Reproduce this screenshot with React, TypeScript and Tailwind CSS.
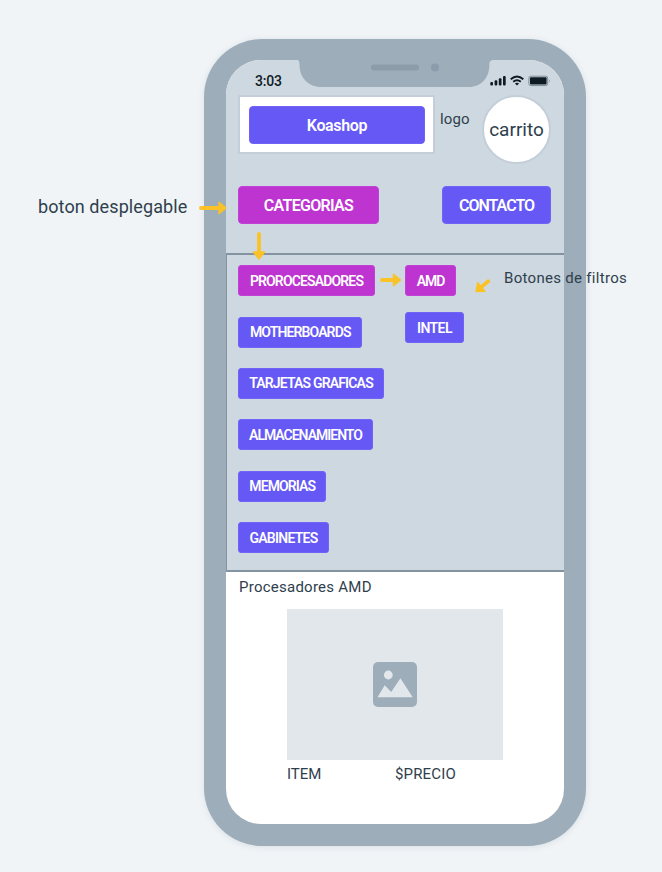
import React from "react";

type ChipProps = { label: string; size: string; active?: boolean };

function Chip({ label, size, active }: ChipProps) {
  return (
    <button
      className={`flex h-[31px] shrink-0 items-center justify-center whitespace-nowrap rounded-[3px] border text-[14px] font-semibold leading-none text-white ${size} ${
        active ? "border-[#c141d5] bg-[#bd34d1]" : "border-[#7063f5] bg-[#6558f5]"
      }`}
    >
      {label}
    </button>
  );
}

const categories: ChipProps[] = [
  { label: "PROROCESADORES", size: "w-[137px] tracking-[-0.85px]", active: true },
  { label: "MOTHERBOARDS", size: "w-[124.5px] tracking-[-0.87px]" },
  { label: "TARJETAS GRAFICAS", size: "w-[146px] tracking-[-0.83px]" },
  { label: "ALMACENAMIENTO", size: "w-[135px] tracking-[-1px]" },
  { label: "MEMORIAS", size: "w-[88.5px] tracking-[-0.9px]" },
  { label: "GABINETES", size: "w-[91px] tracking-[-0.75px]" },
];

function Arrow({ className, length }: { className: string; length: number }) {
  return (
    <svg className={`absolute overflow-visible ${className}`} width={length} height="12" viewBox={`0 0 ${length} 12`}>
      <path d={`M2 6H${length - 7}`} stroke="#fac226" strokeWidth="3.8" strokeLinecap="round" />
      <path
        d={`M${length - 8} .4L${length - 1} 6L${length - 8} 11.6Z`}
        fill="#fac226"
        stroke="#fac226"
        strokeWidth="1.4"
        strokeLinejoin="round"
      />
    </svg>
  );
}

function StatusIcons() {
  return (
    <svg width="62" height="12" viewBox="0 0 62 12" fill="#0f1b24">
      <rect x="0.3" y="7" width="2.7" height="3.5" rx="1" />
      <rect x="4.6" y="5.3" width="2.7" height="5.2" rx="1" />
      <rect x="8.8" y="3.3" width="2.7" height="7.2" rx="1" />
      <rect x="13" y="1" width="2.7" height="9.5" rx="1" />
      <g fill="none" stroke="#0f1b24" strokeWidth="1.9">
        <path d="M20.7 4.2Q27 -1.4 33.3 4.2" />
        <path d="M23.2 6.8Q27 3.5 30.8 6.8" />
      </g>
      <path d="M24.9 8.4Q27 6.9 29.1 8.4L27 10.5Z" />
      <rect x="38.9" y="1.2" width="18.8" height="9.4" rx="2" fill="none" stroke="#7e8b95" />
      <rect x="40" y="2.3" width="16.6" height="7.2" rx="1" />
      <path d="M59 4.2Q60.6 5.9 59 7.6Z" fill="#7e8b95" />
    </svg>
  );
}

export default function App() {
  return (
    <div className="relative h-[872px] w-[662px] overflow-hidden bg-[#f0f4f7] pl-[204px] pt-[38.5px] font-['Roboto','Liberation_Sans',sans-serif] text-[#2f404d]">
      <div className="relative h-[807.5px] w-[382px] rounded-[58px] bg-[#9eadba] py-[21.5px] pl-[21.7px] pr-[21.7px] shadow-[0_1px_6px_rgba(70,90,110,0.13)]">
        <div className="flex h-[764px] flex-col overflow-hidden rounded-[35px] bg-white">
          <header className="h-[193px] shrink-0 bg-[#ced8e0] pl-[12.3px] pr-[13.3px]">
            <div className="flex h-[35px] items-start justify-between pl-[17px]">
              <span className="pt-[12px] text-[14px] font-medium leading-[18px] tracking-[-0.2px] text-[#0f1b24]">3:03</span>
              <span className="-mr-px pt-[15px]"><StatusIcons /></span>
            </div>
            <div className="flex items-start">
              <div className="h-[59px] w-[197px] border-2 border-[#c3ced8] bg-white px-[9px] pt-[9px]">
                <button className="flex h-[38px] w-[176px] items-center justify-center rounded-[4px] border border-[#7063f5] bg-[#6558f5] pt-0.5 text-[16px] font-semibold leading-none tracking-[-0.35px] text-white">
                  Koashop
                </button>
              </div>
              <span className="ml-[5px] mt-[14px] w-[42px] text-[15px] leading-5 tracking-[0.1px]">logo</span>
              <div className="flex h-[69px] w-[69px] shrink-0 items-center justify-center rounded-full border-2 border-[#c3ced8] bg-white text-[19px] leading-none">
                carrito
              </div>
            </div>
            <div className="mt-[22px] flex justify-between">
              <button className="h-[38px] w-[141px] rounded-[4px] border border-[#c141d5] bg-[#bd34d1] pt-0.5 text-[16px] font-semibold leading-none tracking-[-0.7px] text-white">
                CATEGORIAS
              </button>
              <button className="h-[38px] w-[109px] rounded-[4px] border border-[#7063f5] bg-[#6558f5] pt-0.5 text-[16px] font-semibold leading-none tracking-[-1px] text-white">
                CONTACTO
              </button>
            </div>
          </header>
          <section className="flex h-[319px] shrink-0 items-start border-y-2 border-l border-[#8393a1] bg-[#ced8e0] pl-[11.3px] pt-[10.2px]">
            <div className="flex w-[167px] flex-col items-start gap-[20.4px]">
              {categories.map((c) => <Chip key={c.label} {...c} />)}
            </div>
            <div className="flex flex-col items-start gap-4">
              <Chip label="AMD" size="w-[51px] tracking-[-1px]" active />
              <Chip label="INTEL" size="w-[59px] tracking-[-0.6px]" />
            </div>
          </section>
          <main className="pl-[13.3px] pt-[5px]">
            <h2 className="text-[15px] leading-5 tracking-[0.25px]">Procesadores AMD</h2>
            <div className="ml-12 mt-3 w-[216px]">
              <div className="flex h-[151px] items-center justify-center bg-[#e2e7eb]">
                <svg width="44" height="45" viewBox="0 0 44 45">
                  <rect width="44" height="45" rx="5" fill="#9eadba" />
                  <g fill="#e2e7eb">
                    <circle cx="15.3" cy="13" r="4.4" />
                    <path d="M4.5 35.2L11.7 23.2L18.2 30L27.4 16.2L39.7 35.2Z" />
                  </g>
                </svg>
              </div>
              <div className="grid grid-cols-2 pt-1 text-[15px] leading-5">
                <span>ITEM</span>
                <span className="tracking-[0.15px]">$PRECIO</span>
              </div>
            </div>
          </main>
        </div>

        <svg className="absolute left-[94px] top-[21px]" width="194" height="28" viewBox="0 0 194 28">
          <path d="M0 0H194V.5C192 .5 191.4 2 191.4 5C191.4 18 183 27 171 27H23C11 27 1.5 18 1.5 5C1.5 2 1 .5 0 .5Z" fill="#9eadba" />
          <rect x="73" y="4.5" width="48" height="6" rx="3" fill="#8d9caa" />
          <circle cx="137" cy="7.5" r="4" fill="#8d9caa" />
        </svg>
      </div>

      <span className="absolute left-[38px] top-[195px] whitespace-nowrap text-[18px] leading-6 tracking-[0.1px]">boton desplegable</span>
      <span className="absolute left-[504px] top-[268px] whitespace-nowrap text-[15px] leading-5 tracking-[0.3px]">Botones de filtros</span>
      <Arrow className="left-[199px] top-[201.5px]" length={28} />
      <Arrow className="left-[244.5px] top-[240px] rotate-90" length={28} />
      <Arrow className="left-[379.5px] top-[273.5px]" length={21.5} />
      <Arrow className="left-[473px] top-[280px] rotate-[140deg]" length={19} />
    </div>
  );
}
